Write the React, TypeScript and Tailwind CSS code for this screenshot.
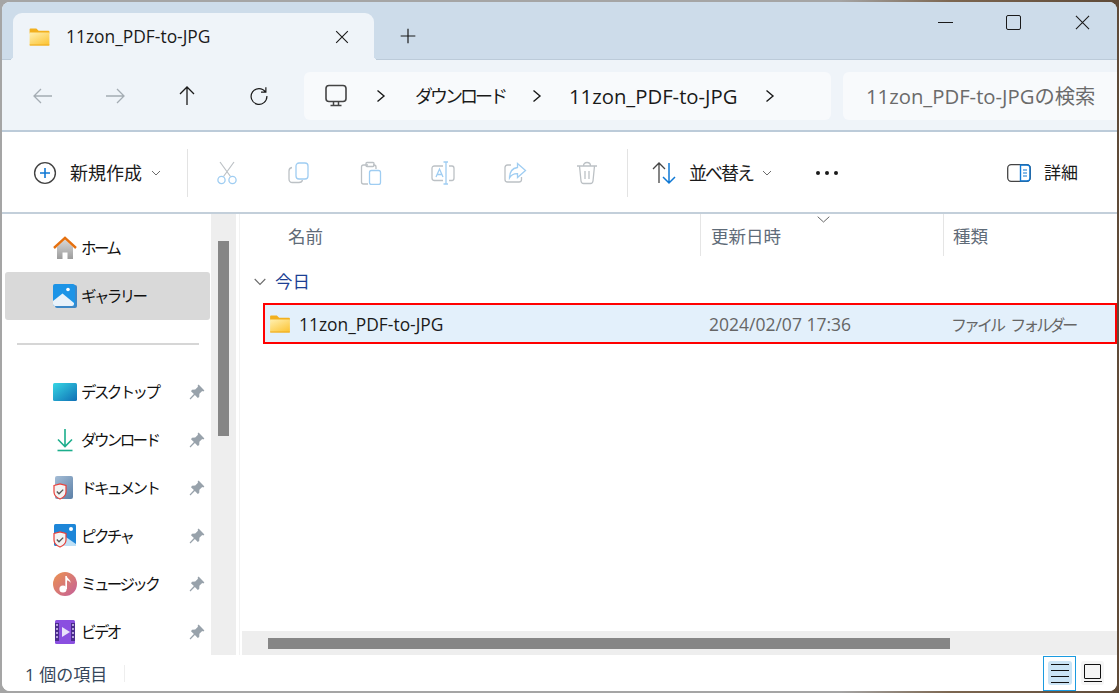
import type { ReactNode } from 'react';

const font = { jp: "font-['Open_Sans','Noto_Sans_CJK_JP',sans-serif]" };

function Svg({ size = 24, children, className = '' }: { size?: number; children: ReactNode; className?: string }) {
    return (
        <svg width={size} height={size} viewBox="0 0 24 24" fill="none" className={className}>
            {children}
        </svg>
    );
}

function Folder({ w = 24, h = 20 }: { w?: number; h?: number }) {
    return (
        <svg width={w} height={h} viewBox="0 0 24 20">
            <defs>
                <linearGradient id="fold" x1="0" y1="0" x2="0.7" y2="1">
                    <stop offset="0" stopColor="#fff0b0" />
                    <stop offset="1" stopColor="#fcc73d" />
                </linearGradient>
            </defs>
            <path d="M1 1.5Q1 .5 2 .5H8.5L11 3H22Q23 3 23 4V6H1Z" fill="#f2b01e" />
            <path d="M1 5H23V18.5Q23 19.5 22 19.5H2Q1 19.5 1 18.5Z" fill="url(#fold)" />
            <path d="M1 18.3H23V18.5Q23 19.5 22 19.5H2Q1 19.5 1 18.5Z" fill="#eea91b" />
        </svg>
    );
}

function Pin() {
    return (
        <svg width="16" height="16" viewBox="0 0 16 16">
            <path d="M9.6 .6 15.4 6.4 14.3 7.4 13.2 7 10.4 9.8 10.2 13 8.8 14 5.9 11.1 1.4 15.4 .6 14.6 4.9 10.1 2 7.2 3 5.8 6.2 5.6 9 2.8 8.6 1.7Z" fill="#98a2ab" />
        </svg>
    );
}

function NavArrow({ d, color }: { d: string; color: string }) {
    return (
        <div className="w-[72px] flex justify-center items-center">
            <Svg size={24}>
                <path d={d} stroke={color} strokeWidth="1.3" />
            </Svg>
        </div>
    );
}

function Chevron({ className = '' }: { className?: string }) {
    return (
        <svg width="12" height="14" viewBox="0 0 12 14" fill="none" className={className}>
            <path d="M2.5 1.5 9 7 2.5 12.5" stroke="#1a1a1a" strokeWidth="1.4" />
        </svg>
    );
}

function Caret() {
    return (
        <svg width="10" height="6" viewBox="0 0 10 6" fill="none">
            <path d="M1 1 5 5 9 1" stroke="#6c6c6c" strokeWidth="1" />
        </svg>
    );
}

const gray = '#bcc1c5';
const blue = '#9fcdf2';

function ToolIcon({ children }: { children: ReactNode }) {
    return <div className="w-[72px] flex justify-center items-center">{children}</div>;
}

function NavItem({ icon, label, pinned, active }: { icon: ReactNode; label: string; pinned?: boolean; active?: boolean }) {
    return (
        <div className={`h-12 ml-[3px] w-[205px] flex items-center rounded-[3px] ${active ? 'bg-[#d9d9d9]' : ''}`}>
            <div className="w-[24px] ml-[48px] h-[24px] flex items-center justify-center shrink-0">{icon}</div>
            <span className="ml-[4px] pt-[2px] text-[15.5px] tracking-[-2.6px] text-[#111] whitespace-nowrap flex-1">{label}</span>
            {pinned && <span className="mr-[5px]"><Pin /></span>}
        </div>
    );
}

function Shield() {
    return (
        <svg width="14" height="17" viewBox="0 0 14 17" className="absolute left-0 bottom-0">
            <path d="M1 2.5 7 .8 13 2.5V9Q13 13.5 7 16 1 13.5 1 9Z" fill="#f4f4f4" stroke="#e8403a" strokeWidth="1.2" />
            <path d="M3.8 8.5 6 10.8 10.2 6.6" fill="none" stroke="#555" strokeWidth="1.3" />
        </svg>
    );
}

export default function App() {
    return (
        <div className={`w-[1119px] h-[693px] overflow-hidden p-[2px] bg-[linear-gradient(90deg,#a5a5a5_0%,#a5a5a5_75%,#7c6650_85%,#5e4a38_100%)] ${font.jp}`}>
            <div className="w-full h-full rounded-[8px] overflow-hidden bg-white flex flex-col">
                {/* title bar */}
                <div className="h-[58px] shrink-0 bg-[#cddcea] border-b border-[#bccbd9] flex items-end pl-[11px] relative">
                    <div className="relative w-[361px] h-[47px] -mb-px bg-[#eff4f9] rounded-t-[9px] flex items-center pl-[15px]">
                        <span className="absolute -left-[4px] bottom-0 w-[4px] h-[4px] bg-[radial-gradient(circle_at_0_0,transparent_4px,#eff4f9_4px)]" />
                        <span className="absolute -right-[4px] bottom-0 w-[4px] h-[4px] bg-[radial-gradient(circle_at_100%_0,transparent_4px,#eff4f9_4px)]" />
                        <Folder w={23} h={18} />
                        <span className="ml-[15px] text-[17.4px] text-[#1a1a1a] flex-1 mb-[1px]">11zon_PDF-to-JPG</span>
                        <Svg size={14} className="mr-[25px]">
                            <path d="M2 2 22 22M22 2 2 22" stroke="#1a1a1a" strokeWidth="1.9" />
                        </Svg>
                    </div>
                    <div className="h-[47px] flex items-center ml-[26px]">
                        <Svg size={16}>
                            <path d="M12 1V23M1 12H23" stroke="#1a1a1a" strokeWidth="1.8" />
                        </Svg>
                    </div>
                    <div className="ml-auto self-start flex items-center h-[41px] pr-[27px] gap-[54px]">
                        <span className="w-[15px] h-[1.2px] bg-[#1a1a1a]" />
                        <span className="w-[15px] h-[15px] border-[1.5px] border-[#1a1a1a] rounded-[2px] -ml-[1px]" />
                        <Svg size={15}>
                            <path d="M1.5 1.5 22.5 22.5M22.5 1.5 1.5 22.5" stroke="#1a1a1a" strokeWidth="1.7" />
                        </Svg>
                    </div>
                </div>

                {/* navigation bar */}
                <div className="h-[72px] shrink-0 bg-[#eff4f9] border-b-2 border-[#bccbd9] flex items-center pl-[5px] pt-[2px]">
                    <NavArrow d="M21 12H3M10 5 3 12 10 19" color="#a4acb3" />
                    <NavArrow d="M3 12H21M14 5 21 12 14 19" color="#a4acb3" />
                    <NavArrow d="M12 21V3M5 10 12 3 19 10" color="#1a1a1a" />
                    <div className="w-[72px] flex justify-center">
                        <Svg size={22}>
                            <path d="M19 7.5A8.6 8.6 0 1 0 20.6 12M19.5 2.5V7.8H14.2" stroke="#1a1a1a" strokeWidth="1.3" />
                        </Svg>
                    </div>
                    <div className="ml-[9px] w-[527px] h-[48px] rounded-[6px] bg-[#f8fafc] flex items-center text-[#1a1a1a] text-[20.3px] pl-[20px]">
                        <svg width="24" height="24" viewBox="0 0 24 24" fill="none">
                            <rect x="2" y="1.5" width="20" height="16" rx="3" stroke="#444" strokeWidth="1.6" />
                            <path d="M9.5 18V21M14.5 18V21M6.5 21.5H17.5" stroke="#444" strokeWidth="1.5" />
                        </svg>
                        <Chevron className="ml-[27px]" />
                        <span className="ml-[28px] w-[91px] whitespace-nowrap text-[18px] tracking-[-3px]">ダウンロード</span>
                        <Chevron className="ml-[25px]" />
                        <span className="ml-[26px] whitespace-nowrap">11zon_PDF-to-JPG</span>
                        <Chevron className="ml-[27px]" />
                    </div>
                    <div className="ml-[12px] flex-1 h-[48px] rounded-l-[6px] bg-[#f8fafc] flex items-center pl-[23px] text-[20.3px] text-[#6b6b6b] whitespace-nowrap overflow-hidden">
                        11zon_PDF-to-JPGの検索
                    </div>
                </div>

                {/* command bar */}
                <div className="h-[82px] shrink-0 bg-white border-b-2 border-[#c3cfda] flex items-center pl-[31px] pt-[2px] text-[18px] text-[#1a1a1a]">
                    <svg width="24" height="24" viewBox="0 0 24 24" fill="none">
                        <circle cx="12" cy="12" r="10.4" stroke="#444" strokeWidth="1.4" />
                        <path d="M12 7V17M7 12H17" stroke="#0f78d4" strokeWidth="1.6" />
                    </svg>
                    <span className="ml-[13px]">新規作成</span>
                    <span className="ml-[9px] flex"><Caret /></span>
                    <span className="ml-[26px] w-px h-[48px] bg-[#e3e3e3]" />
                    <span className="w-[3px]" />
                    <ToolIcon>
                        <Svg>
                            <path d="M5 1 15.5 15.5M19 1 8.5 15.5" stroke={gray} strokeWidth="1.2" />
                            <circle cx="6.5" cy="19" r="3.6" stroke={blue} strokeWidth="1.3" />
                            <circle cx="17.5" cy="19" r="3.6" stroke={blue} strokeWidth="1.3" />
                        </Svg>
                    </ToolIcon>
                    <ToolIcon>
                        <Svg>
                            <path d="M5 6.5Q2 7 2 10V18Q2 21.5 5.5 21.5H12Q15 21.5 15.5 19" stroke={gray} strokeWidth="1.3" />
                            <rect x="9" y="2" width="12" height="16" rx="3" stroke={blue} strokeWidth="1.3" />
                        </Svg>
                    </ToolIcon>
                    <ToolIcon>
                        <Svg>
                            <path d="M9 4H4.5Q2.5 4 2.5 6V21Q2.5 23 4.5 23H9M17 8V6Q17 4 15 4H14" stroke={gray} strokeWidth="1.3" />
                            <rect x="7" y="1.5" width="8" height="4" rx="1" stroke={gray} strokeWidth="1.3" />
                            <rect x="10.5" y="9.5" width="11" height="14" rx="2" stroke={blue} strokeWidth="1.3" />
                        </Svg>
                    </ToolIcon>
                    <ToolIcon>
                        <Svg>
                            <path d="M12 5H3.5Q1 5 1 7.5V17Q1 19.5 3.5 19.5H12M18 5H21Q23 5 23 7.5V17Q23 19.5 21 19.5H18" stroke={gray} strokeWidth="1.3" />
                            <path d="M12.5 1H17M15 1V23M12.5 23H17" stroke={blue} strokeWidth="1.3" />
                            <path d="M5 16 8.5 8 12 16M6 13.5H11" stroke={blue} strokeWidth="1.3" />
                        </Svg>
                    </ToolIcon>
                    <ToolIcon>
                        <Svg>
                            <path d="M8 4H4.5Q2 4 2 6.5V18.5Q2 21 4.5 21H16Q18.5 21 18.5 18.5V16" stroke={gray} strokeWidth="1.3" />
                            <path d="M14.5 2.5 22.5 9.5 14.5 16.5V12.7Q9 12.5 6.5 17 6.5 7.5 14.5 6.5Z" stroke={blue} strokeWidth="1.3" />
                        </Svg>
                    </ToolIcon>
                    <ToolIcon>
                        <Svg>
                            <path d="M2 5H22M8.5 5Q8.5 1.5 12 1.5T15.5 5M4.5 5 6 20Q6.3 22.5 8.5 22.5H15.5Q17.7 22.5 18 20L19.5 5M10 10V18M14 10V18" stroke={gray} strokeWidth="1.3" />
                        </Svg>
                    </ToolIcon>
                    <span className="ml-[4px] w-px h-[48px] bg-[#e3e3e3]" />
                    <svg width="24" height="24" viewBox="0 0 24 24" fill="none" className="ml-[24px]">
                        <path d="M7 22V2M1 8 7 2 13 8" stroke="#444" strokeWidth="1.3" />
                        <path d="M17 2V22M11 16 17 22 23 16" stroke="#0f78d4" strokeWidth="1.5" />
                    </svg>
                    <span className="ml-[13px] w-[64px] whitespace-nowrap tracking-[-2px]">並べ替え</span>
                    <span className="ml-[9px] flex"><Caret /></span>
                    <span className="ml-[44px] flex gap-[5px]">
                        <i className="w-[4px] h-[4px] rounded-full bg-[#1a1a1a]" />
                        <i className="w-[4px] h-[4px] rounded-full bg-[#1a1a1a]" />
                        <i className="w-[4px] h-[4px] rounded-full bg-[#1a1a1a]" />
                    </span>
                    <span className="ml-auto flex items-center pr-[39px]">
                        <svg width="24" height="18" viewBox="0 0 24 18" fill="none">
                            <rect x=".7" y=".7" width="22.6" height="16.6" rx="3.5" stroke="#444" strokeWidth="1.3" />
                            <path d="M13.5 1H20Q23 1 23 4V14Q23 17 20 17H13.5Z" stroke="#0f78d4" strokeWidth="1.4" />
                            <path d="M16 6H20M16 9H20M16 12H20" stroke="#0f78d4" strokeWidth="1.2" />
                        </svg>
                        <span className="ml-[13px] text-[17px]">詳細</span>
                    </span>
                </div>

                {/* body */}
                <div className="flex-1 min-h-0 flex">
                    <aside className="w-[209px] shrink-0 pt-[10px] overflow-hidden">
                        <NavItem
                            label="ホーム"
                            icon={
                                <svg width="24" height="24" viewBox="0 0 24 24">
                                    <defs>
                                        <linearGradient id="hm" x1="0" y1="0" x2="0" y2="1">
                                            <stop offset="0" stopColor="#d8d8d8" />
                                            <stop offset="1" stopColor="#9c9c9c" />
                                        </linearGradient>
                                    </defs>
                                    <path d="M4 11 12 3.5 20 11V23H14.5V16.5H9.5V23H4Z" fill="url(#hm)" />
                                    <path d="M1 12 12 1.8 23 12" fill="none" stroke="#e5700f" strokeWidth="2.4" />
                                </svg>
                            }
                        />
                        <NavItem
                            active
                            label="ギャラリー"
                            icon={
                                <svg width="24" height="24" viewBox="0 0 24 24">
                                    <rect x="2" y="1" width="22" height="23" rx="2" fill="#3d87c6" />
                                    <rect x="0" y="0" width="22" height="22" rx="2" fill="#1d94e6" />
                                    <path d="M0 17 9.5 9.5 21 19V20Q21 22 19 22H2Q0 22 0 20Z" fill="#e9f2fa" />
                                    <circle cx="15" cy="5.5" r="1.8" fill="#fff" />
                                </svg>
                            }
                        />
                        <div className="ml-[15px] w-[182px] h-[2px] my-[23px] bg-[#d6d6d6]" />
                        <NavItem
                            pinned
                            label="デスクトップ"
                            icon={
                                <svg width="24" height="18" viewBox="0 0 24 18">
                                    <defs>
                                        <linearGradient id="dk" x1="0" y1="0" x2="1" y2="1">
                                            <stop offset="0" stopColor="#36d6e4" />
                                            <stop offset="1" stopColor="#0f6fb5" />
                                        </linearGradient>
                                    </defs>
                                    <rect width="24" height="18" rx="1.5" fill="url(#dk)" />
                                </svg>
                            }
                        />
                        <NavItem
                            pinned
                            label="ダウンロード"
                            icon={
                                <svg width="24" height="24" viewBox="0 0 24 24" fill="none">
                                    <path d="M12 1V18M5 11.5 12 18.5 19 11.5" stroke="#1cae8c" strokeWidth="1.6" />
                                    <path d="M4.5 22.5H19.5" stroke="#1cae8c" strokeWidth="1.6" />
                                </svg>
                            }
                        />
                        <NavItem
                            pinned
                            label="ドキュメント"
                            icon={
                                <div className="relative w-[24px] h-[24px]">
                                    <div className="absolute left-[2px] top-0 w-[18px] h-[23px] rounded-[2px] bg-[linear-gradient(135deg,#a5bdd6,#5b7fa6)]" />
                                    <Shield />
                                </div>
                            }
                        />
                        <NavItem
                            pinned
                            label="ピクチャ"
                            icon={
                                <div className="relative w-[24px] h-[24px]">
                                    <svg width="22" height="22" viewBox="0 0 22 22" className="absolute left-[1px] top-0">
                                        <rect width="22" height="22" rx="1.5" fill="#1d86d8" />
                                        <circle cx="17" cy="5" r="2" fill="#fff" />
                                        <path d="M6 9 22 20V22H6Z" fill="#bfe0f6" />
                                    </svg>
                                    <Shield />
                                </div>
                            }
                        />
                        <NavItem
                            pinned
                            label="ミュージック"
                            icon={
                                <div className="w-[24px] h-[24px] rounded-full bg-[linear-gradient(135deg,#ec9350,#c45f9a)] flex items-center justify-center">
                                    <svg width="14" height="18" viewBox="0 0 14 18">
                                        <circle cx="5" cy="14" r="3.6" fill="#fff" />
                                        <path d="M7.3 14V1H8.8C9 4 13 4.5 12.5 8 11.5 6 10 5.6 9 5.6V14Z" fill="#fff" />
                                    </svg>
                                </div>
                            }
                        />
                        <NavItem
                            pinned
                            label="ビデオ"
                            icon={
                                <svg width="20" height="24" viewBox="0 0 20 24">
                                    <rect width="20" height="24" rx="1.5" fill="#8a4fe0" />
                                    <path d="M0 3H4V21H0ZM16 3H20V21H16Z" fill="#4b2c8e" />
                                    <path d="M1 5H3M1 9H3M1 13H3M1 17H3M17 5H19M17 9H19M17 13H19M17 17H19" stroke="#d9c7f6" strokeWidth="1.6" />
                                    <path d="M7 7 15 12 7 17Z" fill="#e8e2fa" />
                                </svg>
                            }
                        />
                    </aside>
                    {/* sidebar scrollbar */}
                    <div className="w-[25px] shrink-0 bg-[#eeeeee] pl-[7px] pt-[27px]">
                        <div className="w-[11px] h-[195px] bg-[#868686]" />
                    </div>
                    <div className="w-[3px] shrink-0 bg-white" />
                    <div className="w-px shrink-0 bg-[#f2f2f2]" />

                    {/* file list */}
                    <div className="flex-1 min-w-0 flex flex-col relative">
                        <div className="h-[42px] flex text-[17.5px] text-[#5f6b78] relative">
                            <span className="w-[461px] pl-[48px] pt-[2px] flex items-center border-r border-[#e5e5e5]">名前</span>
                            <span className="w-[243px] pl-[10px] pt-[2px] flex items-center border-r border-[#e5e5e5]">更新日時</span>
                            <span className="pl-[9px] pt-[2px] flex items-center">種類</span>
                            <span className="absolute left-[577px] top-[2px] flex">
                                <svg width="13" height="7" viewBox="0 0 13 7" fill="none">
                                    <path d="M.7.7 6.5 6 12.3.7" stroke="#666" strokeWidth="1" />
                                </svg>
                            </span>
                        </div>
                        <div className="h-[47px] pt-[4px] flex items-center text-[17.5px] text-[#1c3f94]">
                            <svg width="12" height="8" viewBox="0 0 12 8" fill="none" className="ml-[14px]">
                                <path d="M.7 1 6 6.5 11.3 1" stroke="#6c6c6c" strokeWidth="1.1" />
                            </svg>
                            <span className="ml-[9px]">今日</span>
                        </div>
                        <div className="ml-[23px] h-[41px] pt-[2px] bg-[#e3f0fb] border-2 border-[#ff0000] flex items-center text-[17.4px]">
                            <span className="ml-[3px] -mt-[2px] flex"><Folder w={24} h={18} /></span>
                            <span className="ml-[7px] w-[410px] text-[#1a1a1a]">11zon_PDF-to-JPG</span>
                            <span className="w-[242px] text-[#666] text-[17.5px]">2024/02/07 17:36</span>
                            <span className="text-[#666] text-[16px] tracking-[-3px] [word-spacing:6px] whitespace-nowrap">ファイル フォルダー</span>
                        </div>
                        <div className="flex-1" />
                        {/* horizontal scrollbar */}
                        <div className="ml-[2px] h-[24px] bg-[#eeeeee] flex items-center pl-[26px] pt-[1px]">
                            <div className="w-[682px] h-[11px] bg-[#868686]" />
                        </div>
                    </div>
                </div>

                {/* status bar */}
                <div className="h-[36px] shrink-0 flex items-center text-[#36465a] text-[17px] bg-white">
                    <span className="ml-[23px] w-[99px] pt-[3px] whitespace-nowrap">1 個の項目</span>
                    <span className="w-px h-[17px] bg-[#eeeeee]" />
                    <div className="ml-auto mr-[13px] flex items-center h-full">
                        <div className="w-[33px] h-[35px] border border-[#1b9be0] bg-white flex items-center justify-center">
                            <div className="w-[24px] h-[24px] rounded-[3px] bg-[#cbe4f5] flex flex-col items-center justify-center gap-[5px]">
                                <i className="w-[18px] h-px bg-[#111]" />
                                <i className="w-[18px] h-px bg-[#111]" />
                                <i className="w-[18px] h-px bg-[#111]" />
                                <i className="w-[18px] h-px bg-[#111]" />
                            </div>
                        </div>
                        <div className="ml-[5px] w-[23px] h-[24px] rounded-[3px] bg-[#f5f5f5] flex flex-col items-center justify-center gap-[2px]">
                            <i className="w-[17px] h-[15px] border border-[#111] rounded-[1px]" />
                            <i className="w-[18px] h-px bg-[#111]" />
                        </div>
                    </div>
                </div>
            </div>
        </div>
    );
}
